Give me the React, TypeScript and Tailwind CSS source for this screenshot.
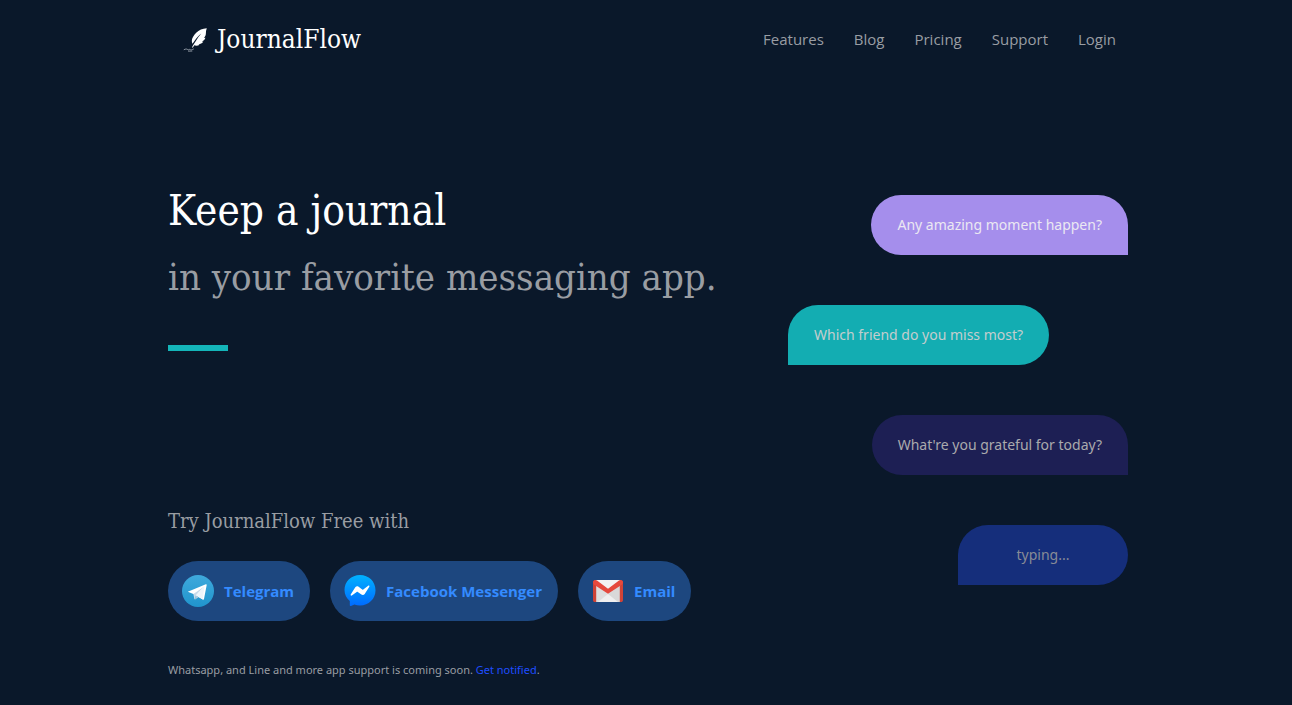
import React from "react";

const serif = "font-['DejaVu_Serif_Condensed','DejaVu_Serif',serif]";

function QuillIcon() {
  return (
    <svg viewBox="0 0 26 26" className="h-[26px] w-[26px]" aria-hidden="true">
      <path
        fill="#fff"
        d="M23.8 2.200c-4.300.2-7.900 1.700-10.600 4.500-2.300 2.400-4 5-4.300 7.400-.2 1.500.1 2.700.6 3.700l2.300-3.400c1.900-2.700 4-5 6.500-7-2.200 2.500-4 5.100-5.600 7.800l-2.300 3.600-1.400 2.500.8.400 1.500-2.400c1.500.8 3.600.6 5.300-.5l-1.100-.6c2 0 3.700-1 4.800-2.500l-1.400-.3c1.900-.7 3-2 3.500-3.700l-1.400.2c1.300-1.300 1.900-2.900 1.900-4.600 0-1.700.2-3.500.9-5.100z"
      />
      <path
        d="M.8 23.800c2-1.200 3.200-.8 4.100-.1.700.5 1.500-.8 2.300-.1.600.5 1.800.3 3.600-.7M5 25.100c1.500.3 2.700-.2 4.300-.1"
        fill="none"
        stroke="#aab1bb"
        strokeWidth=".8"
      />
    </svg>
  );
}

function TelegramIcon() {
  return (
    <svg viewBox="0 0 32 32" className="h-8 w-8" aria-hidden="true">
      <defs>
        <linearGradient id="tg" x1="0" y1="0" x2="0" y2="1">
          <stop offset="0" stopColor="#3fa9dc" />
          <stop offset="1" stopColor="#2095cd" />
        </linearGradient>
      </defs>
      <circle cx="16" cy="16" r="16" fill="url(#tg)" />
      <path d="M5.800 16.700 23.800 9.200c.6-.2 1 .1.900.8l-2.700 14c-.1.700-.7.900-1.300.5l-9.300-5.500z" fill="#fff" />
      <path d="m11.400 19 10.800-7.400-8.200 8.700-.9 4.200c-.4 0-.6-.3-.8-.8z" fill="#c8daea" />
      <path d="m13.100 24.500.9-4.200 2.700 2z" fill="#a9c9dd" />
      <path d="m14 20.300 8.400-9-1.700 13.200z" fill="#eef5fa" />
    </svg>
  );
}

function MessengerIcon() {
  return (
    <svg viewBox="0 0 32 32" className="h-8 w-8" aria-hidden="true">
      <defs>
        <linearGradient id="fb" x1="0" y1="0" x2="0" y2="1">
          <stop offset="0" stopColor="#00b2ff" />
          <stop offset="1" stopColor="#006aff" />
        </linearGradient>
      </defs>
      <path
        fill="url(#fb)"
        d="M16 0C7.300 0 .5 6.500.5 15c0 4.600 2 8.400 5.300 11.100v4.200c0 .7.600 1 1.200.7l3.400-1.500c1.700.6 3.600.9 5.600.9 8.700 0 15.500-6.500 15.500-15.200S24.700 0 16 0z"
      />
      <path
        fill="#fff"
        d="m6.700 19.600 4.600-7.300c.7-1.100 2.200-1.400 3.300-.6l3.600 2.700c.3.300.8.300 1.100 0l4.900-3.700c.7-.5 1.500.3 1.100 1l-4.600 7.300c-.7 1.100-2.200 1.400-3.300.6l-3.600-2.700c-.3-.3-.8-.3-1.100 0l-4.900 3.700c-.7.500-1.500-.3-1.100-1z"
      />
    </svg>
  );
}

function GmailIcon() {
  return (
    <svg viewBox="0 0 32 32" className="h-8 w-8" aria-hidden="true">
      <path d="M3 5h26v22H3z" fill="#e4e4e4" />
      <path d="m4 27 12-9 12 9z" fill="#efefef" />
      <path d="m4 10 12 9-10 8H4z" fill="#dedede" />
      <path d="M4 5h24l-12 9.500z" fill="#f3f3f3" />
      <path d="m16 19 12-9v17h-2z" fill="#d9d9d9" />
      <path d="M1 7.200C1 6 1.900 5 3.200 5l1 1v21H2.800C1.800 27 1 26.200 1 25.200zM27.800 6l1-1C30.100 5 31 6 31 7.200v18c0 1-.8 1.800-1.800 1.800h-1.400z" fill="#cf4337" />
      <path d="M1 7.500C1 5.200 3.300 4.200 5 5.500l11 8.300 11-8.300c1.700-1.300 4-.3 4 2 0 .9-.4 1.700-1.200 2.300L16 18.700 2.200 9.800C1.400 9.200 1 8.400 1 7.500z" fill="#e5493d" />
    </svg>
  );
}

const links = ["Features", "Blog", "Pricing", "Support", "Login"];

const apps = [
  { label: "Telegram", icon: <TelegramIcon /> },
  { label: "Facebook Messenger", icon: <MessengerIcon /> },
  { label: "Email", icon: <GmailIcon /> },
];

const bubbles = [
  { text: "Any amazing moment happen?", style: "self-end rounded-br-none bg-[#a58eec] text-[#ebe8f2]" },
  { text: "Which friend do you miss most?", style: "self-start rounded-bl-none bg-[#13adb2] text-[#c3cdce]" },
  { text: "What're you grateful for today?", style: "self-end rounded-br-none bg-[#1d1f54] text-[#aaaaad]" },
  { text: "typing...", style: "min-w-[170px] self-end rounded-bl-none bg-[#152e7b] text-[#878b96]" },
];

export default function App() {
  return (
    <div className="min-h-screen bg-[#0a182a] pr-4 pl-5 font-['Open_Sans','Noto_Sans',sans-serif] text-[15px] leading-6 text-[#999da3]">
      <div className="mx-auto max-w-[960px]">
        <header className="flex flex-wrap items-center justify-between gap-4 px-3 pt-[23px]">
          <a href="#" className={`flex items-center gap-2 pl-[3px] text-[26px] leading-8 text-white ${serif}`}>
            <QuillIcon />
            JournalFlow
          </a>
          <nav className="flex flex-wrap gap-[30px]">
            {links.map((l) => (
              <a key={l} href="#">{l}</a>
            ))}
          </nav>
        </header>

        <main className="flex flex-wrap justify-between gap-y-12 pt-[123px]">
          <section>
            <h1 className={`leading-[66px] ${serif}`}>
              <span className="block text-[42px] text-white">Keep a journal</span>
              <span className="block text-[38px]">in your favorite messaging app.</span>
            </h1>
            <div className="mt-[35px] h-[6px] w-[60px] bg-[#14b5b9]" />
            <h2 className={`mt-[154px] text-xl leading-8 ${serif}`}>Try JournalFlow Free with</h2>
            <div className="mt-6 flex flex-wrap gap-5">
              {apps.map((a) => (
                <button
                  key={a.label}
                  type="button"
                  className="flex h-[60px] cursor-pointer items-center gap-[10px] rounded-full bg-[#1d477f] pr-4 pl-[14px] font-bold text-[#348bff]"
                >
                  {a.icon}
                  {a.label}
                </button>
              ))}
            </div>
            <p className="mt-[37px] font-['Noto_Sans',sans-serif] text-[11px] leading-6">
              Whatsapp, and Line and more app support is coming soon.{" "}
              <a href="#" className="text-[#1f4dff]">Get notified</a>.
            </p>
          </section>

          <section className="flex w-[340px] flex-col gap-[50px] pt-[17px] font-['Noto_Sans',sans-serif] text-sm">
            {bubbles.map((b) => (
              <p key={b.text} className={`flex h-[60px] items-center justify-center rounded-[30px] px-[26px] ${b.style}`}>
                {b.text}
              </p>
            ))}
          </section>
        </main>
      </div>
    </div>
  );
}
